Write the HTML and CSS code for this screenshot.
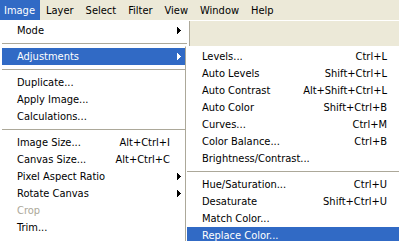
FILE: index.html
```html
<!DOCTYPE html>
<html>
<head>
<meta charset="utf-8">
<link rel="stylesheet" href="styles.css">
</head>
<body>
<div class="screen">
  <div class="menubar">
    <span class="mb-item active">Image</span>
    <span class="mb-item">Layer</span>
    <span class="mb-item">Select</span>
    <span class="mb-item">Filter</span>
    <span class="mb-item">View</span>
    <span class="mb-item">Window</span>
    <span class="mb-item">Help</span>
  </div>
  <div class="workspace">
    <div class="menu main">
      <div class="item"><span class="label">Mode</span><span class="key"></span><span class="sub-arrow"><svg width="4" height="7" viewBox="0 0 4 7" shape-rendering="crispEdges"><polygon points="0,0 4,3.5 0,7"/></svg></span></div>
      <div class="sep"></div>
      <div class="item hot"><span class="label">Adjustments</span><span class="key"></span><span class="sub-arrow"><svg width="4" height="7" viewBox="0 0 4 7" shape-rendering="crispEdges"><polygon points="0,0 4,3.5 0,7"/></svg></span></div>
      <div class="sep"></div>
      <div class="item"><span class="label">Duplicate...</span><span class="key"></span><span class="sub-arrow"></span></div>
      <div class="item"><span class="label">Apply Image...</span><span class="key"></span><span class="sub-arrow"></span></div>
      <div class="item"><span class="label">Calculations...</span><span class="key"></span><span class="sub-arrow"></span></div>
      <div class="sep"></div>
      <div class="item"><span class="label">Image Size...</span><span class="key">Alt+Ctrl+I</span><span class="sub-arrow"></span></div>
      <div class="item"><span class="label">Canvas Size...</span><span class="key">Alt+Ctrl+C</span><span class="sub-arrow"></span></div>
      <div class="item"><span class="label">Pixel Aspect Ratio</span><span class="key"></span><span class="sub-arrow"><svg width="4" height="7" viewBox="0 0 4 7" shape-rendering="crispEdges"><polygon points="0,0 4,3.5 0,7"/></svg></span></div>
      <div class="item"><span class="label">Rotate Canvas</span><span class="key"></span><span class="sub-arrow"><svg width="4" height="7" viewBox="0 0 4 7" shape-rendering="crispEdges"><polygon points="0,0 4,3.5 0,7"/></svg></span></div>
      <div class="item disabled"><span class="label">Crop</span><span class="key"></span><span class="sub-arrow"></span></div>
      <div class="item"><span class="label">Trim...</span><span class="key"></span><span class="sub-arrow"></span></div>
    </div>
    <div class="menu submenu">
      <div class="item"><span class="label">Levels...</span><span class="key">Ctrl+L</span><span class="sub-arrow"></span></div>
      <div class="item"><span class="label">Auto Levels</span><span class="key">Shift+Ctrl+L</span><span class="sub-arrow"></span></div>
      <div class="item"><span class="label">Auto Contrast</span><span class="key">Alt+Shift+Ctrl+L</span><span class="sub-arrow"></span></div>
      <div class="item"><span class="label">Auto Color</span><span class="key">Shift+Ctrl+B</span><span class="sub-arrow"></span></div>
      <div class="item"><span class="label">Curves...</span><span class="key">Ctrl+M</span><span class="sub-arrow"></span></div>
      <div class="item"><span class="label">Color Balance...</span><span class="key">Ctrl+B</span><span class="sub-arrow"></span></div>
      <div class="item"><span class="label">Brightness/Contrast...</span><span class="key"></span><span class="sub-arrow"></span></div>
      <div class="sep"></div>
      <div class="item"><span class="label">Hue/Saturation...</span><span class="key">Ctrl+U</span><span class="sub-arrow"></span></div>
      <div class="item"><span class="label">Desaturate</span><span class="key">Shift+Ctrl+U</span><span class="sub-arrow"></span></div>
      <div class="item"><span class="label">Match Color...</span><span class="key"></span><span class="sub-arrow"></span></div>
      <div class="item hot"><span class="label">Replace Color...</span><span class="key"></span><span class="sub-arrow"></span></div>
    </div>
  </div>
</div>
</body>
</html>
```

FILE: styles.css
```css
* { box-sizing: border-box; }
html, body { margin: 0; padding: 0; background: #ece9d8; }
body {
  font-family: "DejaVu Sans Condensed", "DejaVu Sans", sans-serif;
  font-stretch: condensed;
  font-size: 11px;
  color: #000;
}
.screen {
  width: 399px;
  height: 241px;
  overflow: hidden;
  background: #ece9d8;
}
.menubar {
  display: flex;
  height: 20px;
  align-items: stretch;
  background: #ece9d8;
}
.mb-item {
  display: flex;
  align-items: center;
  padding: 0 6px;
  white-space: nowrap;
}
.mb-item.active {
  background: #316ac5;
  color: #fff;
  padding: 0 5px 0 4px;
}
.workspace {
  position: relative;
  height: 221px;
  border-top: 1px solid #fff;
}
.menu {
  background: #fff;
}
.main {
  width: 190px;
  height: 240px;
  padding: 1px 2px 0 2px;
  border-right: 1px solid #aca899;
}
.submenu {
  position: absolute;
  left: 185px;
  top: 25px;
  width: 220px;
  height: 200px;
  padding: 1px 1px 0 1px;
  border-left: 1px solid #aca899;
  border-top: 1px solid #fff;
}
.item {
  display: grid;
  grid-template-columns: 1fr auto 17px;
  align-items: center;
  height: 17px;
  padding-left: 15px;
  white-space: nowrap;
}
.item.hot {
  background: #316ac5;
  color: #fff;
}
.item.hot svg polygon { fill: #fff; }
.item.disabled { color: #aca899; }
.sub-arrow {
  display: flex;
  align-items: center;
  padding-left: 7px;
}
.sub-arrow svg { display: block; }
.sub-arrow polygon { fill: #000; }
.sep {
  height: 9px;
  display: flex;
  align-items: center;
}
.sep::before {
  content: "";
  display: block;
  width: 100%;
  height: 1px;
  background: #aca899;
}
```
